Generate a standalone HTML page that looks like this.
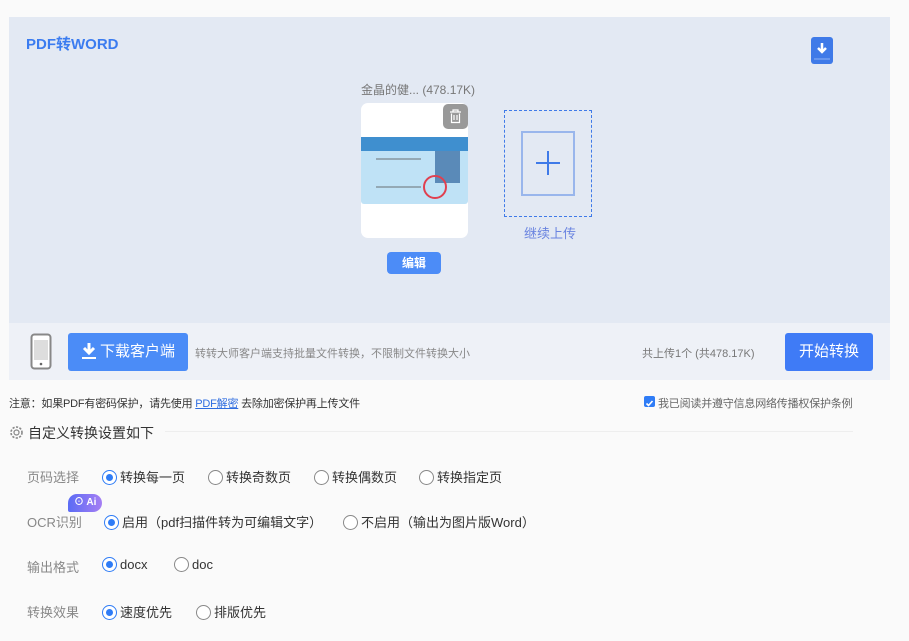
<!DOCTYPE html>
<html><head><meta charset="utf-8"><style>
*{margin:0;padding:0;box-sizing:border-box}
body{width:909px;height:641px;background:#fafafa;font-family:"Liberation Sans","Noto Sans CJK SC",sans-serif;position:relative;overflow:hidden;color:#333}
.a{position:absolute}
.panel{left:9px;top:17px;width:881px;height:306px;background:#e3e9f3}
.bar{left:9px;top:323px;width:881px;height:57px;background:#eef1f7}
.radio{display:inline-block;width:15px;height:15px;border:1px solid #888;border-radius:50%;vertical-align:-3px;margin-right:3px;background:#fff;position:relative}
.radio.on{border-color:#2f7cf6}
.radio.on:after{content:"";position:absolute;left:3px;top:3px;width:7px;height:7px;border-radius:50%;background:#2f7cf6}
.lbl{font-size:13px;color:#888}
.opt{font-size:13px;color:#333}
</style></head><body>
<div class="a panel"></div>
<div class="a" style="left:26px;top:33px;font-size:15px;font-weight:bold;color:#3b7cf0">PDF转WORD</div>
<div class="a" style="left:811px;top:37px;width:22px;height:27px;background:#3f7ae8;border-radius:3px">
<svg width="22" height="27"><path d="M11 6v8M7 11l4 4 4-4" stroke="#fff" stroke-width="2.5" fill="none"/><line x1="3" y1="22" x2="19" y2="22" stroke="#8fb1f3" stroke-width="1"/></svg></div>
<div class="a" style="left:361px;top:81px;font-size:12px;color:#777">金晶的健... (478.17K)</div>
<div class="a" style="left:361px;top:103px;width:107px;height:135px;background:#fff;border-radius:7px;overflow:hidden">
<div class="a" style="left:0;top:34px;width:107px;height:67px;background:#bfe2f6;border-radius:3px"></div>
<div class="a" style="left:0;top:34px;width:107px;height:14px;background:#3f8fcf"></div>
<div class="a" style="left:74px;top:48px;width:25px;height:32px;background:#5a8ab8"></div>
<div class="a" style="left:62px;top:72px;width:24px;height:24px;border:2px solid #e04050;border-radius:50%"></div>
<div class="a" style="left:15px;top:55px;width:45px;height:30px;border-top:2px solid #555;border-bottom:2px solid #555;opacity:.4"></div>
</div>
<div class="a" style="left:443px;top:104px;width:25px;height:25px;background:#999;border-radius:5px">
<svg width="25" height="25"><path d="M7 8h11M10 8V6h5v2M8.5 9.5v9h8v-9M11 11v5M14 11v5" stroke="#fff" stroke-width="1.2" fill="none"/></svg></div>
<div class="a" style="left:387px;top:252px;width:54px;height:22px;background:#4c8cf7;border-radius:4px;color:#fff;font-size:12px;font-weight:bold;text-align:center;line-height:22px">编辑</div>
<div class="a" style="left:504px;top:110px;width:88px;height:107px;border:1px dashed #3f7ae8"></div>
<div class="a" style="left:521px;top:131px;width:54px;height:65px;border:2px solid #99b6ec"></div>
<div class="a" style="left:536px;top:162px;width:24px;height:2px;background:#3f7ae8"></div>
<div class="a" style="left:547px;top:151px;width:2px;height:24px;background:#3f7ae8"></div>
<div class="a" style="left:524px;top:223px;font-size:13px;color:#6a84e0">继续上传</div>
<div class="a bar"></div>
<svg class="a" style="left:30px;top:333px" width="22" height="37"><rect x="1.5" y="1.5" width="19" height="34" rx="3" fill="#fff" stroke="#888" stroke-width="2"/><rect x="4" y="7" width="14" height="20" fill="#ddd"/><circle cx="11" cy="31" r="1.3" fill="#666"/></svg>
<div class="a" style="left:68px;top:333px;width:120px;height:38px;background:#4b8cf7;border-radius:3px;color:#fff;font-size:15px;line-height:38px;padding-left:32px">下载客户端</div>
<svg class="a" style="left:81px;top:342px" width="16" height="18"><path d="M8 1v9M3 6l5 5 5-5" stroke="#fff" stroke-width="3" fill="none"/><rect x="1" y="15" width="14" height="2" fill="#fff"/></svg>
<div class="a" style="left:195px;top:345px;font-size:11px;color:#888">转转大师客户端支持批量文件转换，不限制文件转换大小</div>
<div class="a" style="left:642px;top:345px;font-size:11px;color:#777">共上传1个 (共478.17K)</div>
<div class="a" style="left:785px;top:333px;width:88px;height:38px;background:#3f7bf6;border-radius:3px;color:#fff;font-size:15px;line-height:38px;text-align:center">开始转换</div>
<div class="a" style="left:9px;top:395px;font-size:11px;color:#333;letter-spacing:-0.2px">注意：如果PDF有密码保护，请先使用 <span style="color:#2f6de0;text-decoration:underline">PDF解密</span> 去除加密保护再上传文件</div>
<div class="a" style="left:644px;top:396px;width:11px;height:11px;background:#2f7cf6;border-radius:2px"><svg width="11" height="11"><path d="M2.5 5.5l2 2 4-4.5" stroke="#fff" stroke-width="1.6" fill="none"/></svg></div>
<div class="a" style="left:658px;top:395px;font-size:11px;color:#666;letter-spacing:-0.2px">我已阅读并遵守信息网络传播权保护条例</div>
<svg class="a" style="left:9px;top:425px" width="15" height="15"><circle cx="7.5" cy="7.5" r="2.5" fill="none" stroke="#888" stroke-width="1.2"/><circle cx="7.5" cy="7.5" r="5.5" fill="none" stroke="#888" stroke-width="1.6" stroke-dasharray="2.2 1.4"/></svg>
<div class="a" style="left:28px;top:423px;font-size:14px;color:#333">自定义转换设置如下</div>
<div class="a" style="left:165px;top:431px;width:688px;height:1px;background:#eee"></div>
<div class="a lbl" style="left:27px;top:467px">页码选择</div>
<div class="a opt" style="left:102px;top:467px"><span class="radio on"></span>转换每一页</div>
<div class="a opt" style="left:208px;top:467px"><span class="radio"></span>转换奇数页</div>
<div class="a opt" style="left:314px;top:467px"><span class="radio"></span>转换偶数页</div>
<div class="a opt" style="left:419px;top:467px"><span class="radio"></span>转换指定页</div>
<div class="a" style="left:68px;top:494px;width:34px;height:18px;border-radius:9px 9px 9px 2px;background:linear-gradient(90deg,#5b6cf5,#a57ef3);color:#fff;font-size:10px;font-weight:bold;line-height:18px;padding-left:6px">⊙ Ai</div>
<div class="a lbl" style="left:27px;top:512px">OCR识别</div>
<div class="a opt" style="left:104px;top:512px"><span class="radio on"></span>启用（pdf扫描件转为可编辑文字）</div>
<div class="a opt" style="left:343px;top:512px"><span class="radio"></span>不启用（输出为图片版Word）</div>
<div class="a lbl" style="left:27px;top:557px">输出格式</div>
<div class="a opt" style="left:102px;top:557px"><span class="radio on"></span>docx</div>
<div class="a opt" style="left:174px;top:557px"><span class="radio"></span>doc</div>
<div class="a lbl" style="left:27px;top:602px">转换效果</div>
<div class="a opt" style="left:102px;top:602px"><span class="radio on"></span>速度优先</div>
<div class="a opt" style="left:196px;top:602px"><span class="radio"></span>排版优先</div>
</body></html>
